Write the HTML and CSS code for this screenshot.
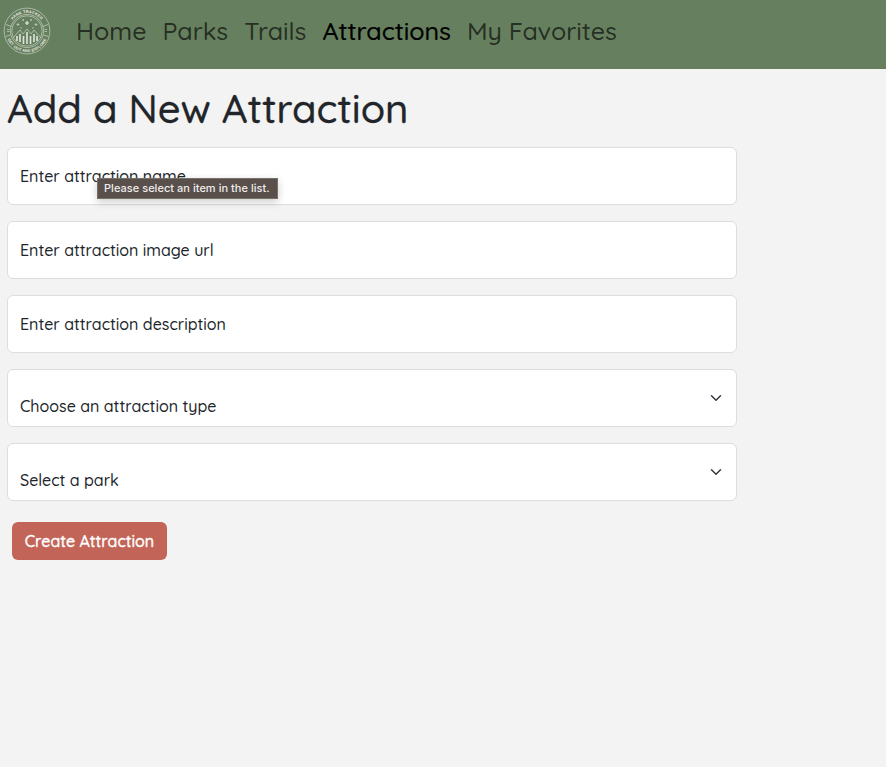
FILE: index.html
```html
<!DOCTYPE html>
<html lang="en">
<head>
<meta charset="utf-8">
<title>Add a New Attraction</title>
<link rel="stylesheet" href="styles.css">
</head>
<body>
<nav class="navbar">
  <svg class="logo" viewBox="0 0 48 48" aria-label="Park Tracker">
    <defs>
      <path id="top-arc" d="M6 24a18 18 0 0 1 36 0"/>
      <path id="bottom-arc" d="M2.8 24a21.2 21.2 0 0 0 42.4 0"/>
    </defs>
    <g class="rings"><circle cx="24" cy="24" r="22.9"/><circle cx="24" cy="24" r="16.6"/><circle cx="24" cy="24" r="15.2"/></g>
    <text class="seal"><textPath href="#top-arc" startOffset="50%">PARK TRACKER</textPath></text>
    <text class="seal"><textPath href="#bottom-arc" startOffset="50%">GET OUT AND EXPLORE</textPath></text>
    <path class="thin" d="M3 17.500l5 2M2.500 29.500l5-1.500M45 17.500l-5 2M45.500 29.500l-5-1.500M4 22.500h2.500M4 24.500h2.500M41.500 22.500h2.500M41.500 24.500h2.500M10 31l7-8 3 4 4-5 4 5 3-4 7 8M15 16v3M13.500 17.500h3M33 16v3M31.500 17.500h3M28 12v2M27 13h2M20 12v2M19 13h2M18 20v2M30 20v2"/>
    <path class="star" d="M24 14v4M22 16h4"/>
    <path class="trees" d="M14 29v5M17 27v8M20.500 29v8M24 25v12M27.500 29v8M31 27v8M34 29v5"/>
  </svg>
  <a class="link">Home</a>
  <a class="link">Parks</a>
  <a class="link">Trails</a>
  <a class="link active">Attractions</a>
  <a class="link">My Favorites</a>
</nav>
<main class="content">
  <h1 class="title">Add a New Attraction</h1>
  <form class="form">
    <div class="field"><label class="label">Enter attraction name</label><div class="tooltip" role="tooltip">Please select an item in the list.</div></div>
    <div class="field"><label class="label">Enter attraction image url</label></div>
    <div class="field"><label class="label">Enter attraction description</label></div>
    <div class="field select"><span class="label">Choose an attraction type</span><svg class="chevron" viewBox="0 0 16 16"><path d="m2 5 6 6 6-6"/></svg></div>
    <div class="field select"><span class="label">Select a park</span><svg class="chevron" viewBox="0 0 16 16"><path d="m2 5 6 6 6-6"/></svg></div>
    <button class="submit" type="button">Create Attraction</button>
  </form>
</main>
</body>
</html>
```
FILE: styles.css
```css
* { box-sizing: border-box; }
body { margin: 0; min-height: 767px; background: #f3f3f3; color: #212529; font: 500 16px/24px Quicksand, Lato, sans-serif; }
.navbar { display: flex; align-items: flex-start; height: 69px; padding: 7px 0 0 3px; background: #667f5e; }
.logo { width: 48px; height: 48px; margin-right: 25px; flex: none; }
.rings circle { fill: none; stroke: #c6d0c2; stroke-width: .7; }
.seal { font: bold 3.9px "Liberation Sans", sans-serif; fill: #e6ebe3; text-anchor: middle; letter-spacing: .15px; }
.thin { fill: none; stroke: #ccd6c9; stroke-width: .7; }
.star { fill: none; stroke: #e6ebe3; stroke-width: 1.2; }
.trees { fill: none; stroke: #dfe6dc; stroke-width: 1.6; }
.link { flex: none; margin-right: 16px; font-size: 25px; line-height: 48px; color: rgba(0,0,0,.65); white-space: nowrap; }
.link.active { color: #000; -webkit-text-stroke: .2px; }
.content { width: 737px; padding: 15px 0 0 7px; }
.title { margin: 0 0 15px; font-size: 40px; font-weight: 500; line-height: 48px; white-space: nowrap; -webkit-text-stroke: .3px; }
.form { display: flex; flex-direction: column; gap: 16px; }
.field { position: relative; display: flex; align-items: center; width: 730px; height: 58px; padding: 0 12px; background: #fff; border: 1px solid #dadfe3; border-radius: 6px; }
.label { white-space: nowrap; }
.select { justify-content: space-between; }
.select .label { padding-top: 16px; }
.chevron { width: 16px; height: 12px; fill: none; stroke: #343a40; stroke-width: 2; stroke-linecap: round; stroke-linejoin: round; }
.tooltip { position: absolute; left: 89px; top: 30px; width: 181px; height: 21px; padding-left: 6px; border: 1px solid #777069; background: #59504b; color: #eeeceb; font: 500 11px/19px Inter, sans-serif; letter-spacing: .03px; white-space: nowrap; box-shadow: 0 3px 8px rgba(0,0,0,.2); }
.submit { align-self: flex-start; width: 155px; height: 38px; margin: 5px 0 0 5px; padding: 0; border: 0; border-radius: 6px; background: #c26558; color: #fff; font: 500 16px/24px Quicksand, Lato, sans-serif; -webkit-text-stroke: .35px; }
```
